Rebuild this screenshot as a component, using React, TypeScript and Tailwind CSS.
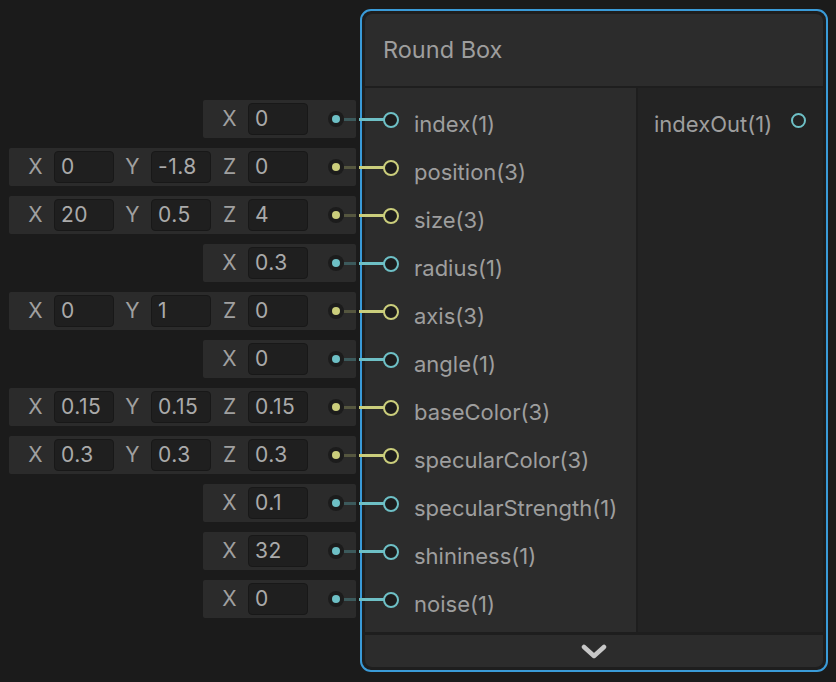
// Shader-graph style node: "Round Box" with inline value fields on the left.

type Port = { name: string; vals: string[] };

const ports: Port[] = [
  { name: "index(1)", vals: ["0"] },
  { name: "position(3)", vals: ["0", "-1.8", "0"] },
  { name: "size(3)", vals: ["20", "0.5", "4"] },
  { name: "radius(1)", vals: ["0.3"] },
  { name: "axis(3)", vals: ["0", "1", "0"] },
  { name: "angle(1)", vals: ["0"] },
  { name: "baseColor(3)", vals: ["0.15", "0.15", "0.15"] },
  { name: "specularColor(3)", vals: ["0.3", "0.3", "0.3"] },
  { name: "specularStrength(1)", vals: ["0.1"] },
  { name: "shininess(1)", vals: ["32"] },
  { name: "noise(1)", vals: ["0"] },
];

const AXES = ["X", "Y", "Z"];

function FieldRow({ port }: { port: Port }) {
  const vec = port.vals.length === 3;
  return (
    <div className="flex h-[38px] items-center rounded-[2px] bg-[#2b2b2b] pl-2">
      {port.vals.map((v, i) => (
        <div key={i} className="flex items-center">
          <span className="w-[37px] text-center text-[21px] text-[#a0a0a0]">
            {AXES[i]}
          </span>
          <span className="flex h-8 w-[60px] items-center rounded-[4px] border border-[#181818] bg-[#1f1f1f] pl-[6px] text-[21px] tracking-[0.5px] text-[#aaaaaa]">
            {v}
          </span>
        </div>
      ))}
      <span className="ml-5 flex h-4 w-4 items-center justify-center rounded-full bg-[#1c1c1c]">
        <span
          className={`h-2 w-2 rounded-full ${vec ? "bg-[#cbce7c]" : "bg-[#6ec0c6]"}`}
        />
      </span>
      <span className={`h-[3px] w-3 ${vec ? "bg-[#55563f]" : "bg-[#3c5a5c]"}`} />
    </div>
  );
}

function InputPort({ port }: { port: Port }) {
  const vec = port.vals.length === 3;
  return (
    <div className="flex h-[38px] items-center pl-[18px]">
      <span className="relative flex h-4 w-4 items-center justify-center">
        <span
          className={`absolute right-[14px] top-[6px] h-[3px] w-[26px] ${vec ? "bg-[#cbce7c]" : "bg-[#6ec0c6]"}`}
        />
        <span
          className={`h-4 w-4 rounded-full border-2 bg-[#1d1d1d] ${vec ? "border-[#cbce7c]" : "border-[#6ec0c6]"}`}
        />
      </span>
      <span className="ml-[15px] mt-2 text-[22px] text-[#9e9e9e]">{port.name}</span>
    </div>
  );
}

export default function App() {
  return (
    <div
      className="flex h-[682px] w-[836px] overflow-hidden bg-[#1b1b1b]"
      style={{ fontFamily: "Inter, 'Noto Sans', sans-serif" }}
    >
      {/* inline value fields */}
      <div className="flex w-[356px] shrink-0 flex-col items-end gap-[10px] pt-[100px]">
        {ports.map((p) => (
          <FieldRow key={p.name} port={p} />
        ))}
      </div>

      {/* the node */}
      <div className="ml-1 mt-[9px] flex h-[663px] w-[468px] shrink-0 flex-col rounded-[11px] border-2 border-[#3a9bd8] bg-[#1e1e1e] p-[3px]">
        <div className="flex h-[72px] items-center rounded-t-[7px] bg-[#2c2c2c] pl-[18px] text-[23.5px] text-[#9e9e9e]">
          Round Box
        </div>
        <div className="mt-[2px] flex flex-1 gap-[2px]">
          <div className="flex w-[271px] flex-col gap-[10px] bg-[#2c2c2c] pt-[13px]">
            {ports.map((p) => (
              <InputPort key={p.name} port={p} />
            ))}
          </div>
          <div className="flex-1 bg-[#232323] pt-[13px]">
            <div className="flex h-[38px] items-center pl-4">
              <span className="mt-2 text-[22px] text-[#9e9e9e]">indexOut(1)</span>
              <span className="ml-auto mr-[17px] h-[15px] w-[15px] rounded-full border-2 border-[#6ec0c6]" />
            </div>
          </div>
        </div>
        <div className="mt-[3px] flex h-[32px] items-center justify-center rounded-b-[7px] bg-[#2c2c2c]">
          <svg width="26" height="15" viewBox="0 0 26 15" fill="none">
            <polyline
              points="3,3 13,12 23,3"
              stroke="#c8c8c8"
              strokeWidth="4.5"
              strokeLinecap="round"
              strokeLinejoin="round"
            />
          </svg>
        </div>
      </div>
    </div>
  );
}
